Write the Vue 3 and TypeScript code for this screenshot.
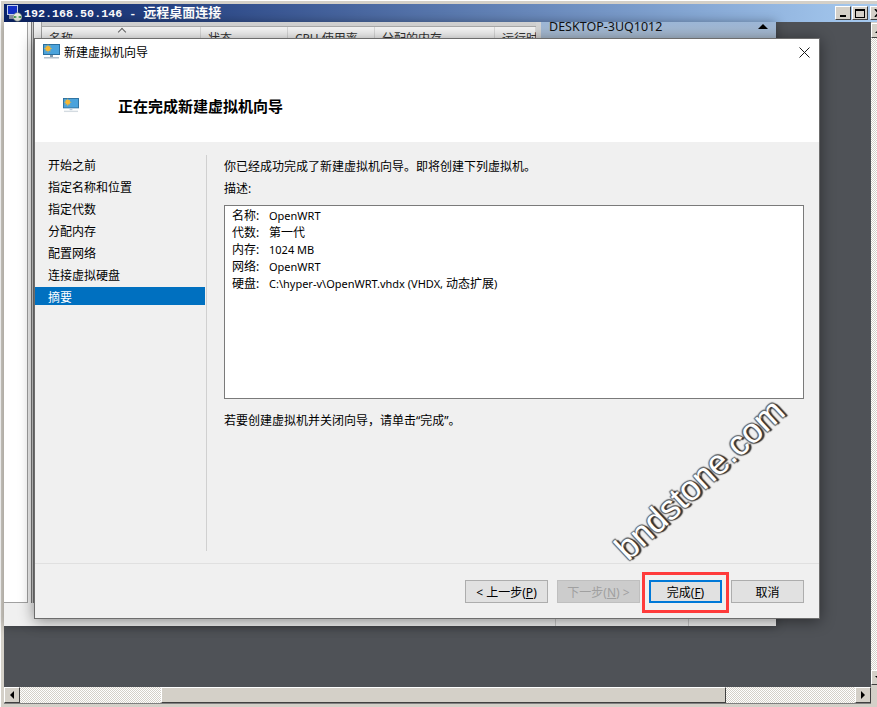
<script setup lang="ts">
const columns = [
  { label: '名称', width: 159 },
  { label: '状态', width: 87 },
  { label: 'CPU 使用率', width: 87 },
  { label: '分配的内存', width: 120 },
  { label: '运行时', width: 41 },
];

const steps = ['开始之前', '指定名称和位置', '指定代数', '分配内存', '配置网络', '连接虚拟硬盘', '摘要'];
const activeStep = '摘要';

// latin runs are a bit smaller than the CJK ones in this dialog
const summary = [
  { label: '名称:', value: 'OpenWRT' },
  { label: '代数:', cjk: '第一代' },
  { label: '内存:', value: '1024 MB' },
  { label: '网络:', value: 'OpenWRT' },
  { label: '硬盘:', value: 'C:\\hyper-v\\OpenWRT.vhdx (VHDX, ', cjk: '动态扩展', tail: ')' },
];
</script>

<template>
  <div class="rdp">
    <div class="titlebar">
      <svg class="rdp-icon" width="16" height="18" viewBox="0 0 16 18">
        <rect x="1" y="1" width="11" height="10" fill="#c4d0ee" />
        <rect x="2" y="2" width="9" height="8" fill="#1430c4" />
        <rect x="3" y="11" width="8" height="4" fill="#8f96a8" />
        <circle cx="11.5" cy="13" r="4.3" fill="#eef0e6" stroke="#7a8a78" stroke-width="0.6" />
        <path d="M8.5 13h2M9.3 12l-1 1 1 1M14.5 13h-2M13.7 12l1 1-1 1" fill="none" stroke="#1c8a2c" stroke-width="1" />
      </svg>
      <span class="title-text"><span class="title-ip">192.168.50.146 - </span>远程桌面连接</span>
      <div class="win-buttons">
        <button class="win-btn"><span class="glyph-min"></span></button>
        <button class="win-btn"><span class="glyph-max"></span></button>
        <button class="win-btn win-close">
          <svg width="9" height="8" viewBox="0 0 9 8"><path d="M1 0l7 8M8 0l-7 8" stroke="#000" stroke-width="1.6" /></svg>
        </button>
      </div>
    </div>

    <div class="middle">
      <div class="client">
        <div class="host">
          <div class="host-main">
            <div class="host-tree"></div>
            <div class="host-splitter"></div>
            <div class="host-center">
              <div class="host-band"></div>
              <div class="host-columns">
                <span class="sort-caret"></span>
                <div v-for="col in columns" :key="col.label" class="host-col" :style="{ width: col.width + 'px' }">
                  {{ col.label }}
                </div>
              </div>
            </div>
            <div class="host-actions">
              <div class="actions-head">
                <span>DESKTOP-3UQ1012</span>
                <i class="actions-arrow"></i>
              </div>
            </div>
          </div>
          <div class="host-foot">
            <span class="foot-tick tick-a"></span>
            <span class="foot-tick tick-b"></span>
          </div>
        </div>

        <div class="dialog">
          <div class="dialog-head">
            <div class="dialog-caption">
              <svg class="monitor" width="17" height="16" viewBox="0 0 17 16">
                <rect x="0.5" y="0.5" width="16" height="10" fill="#4ba3dc" stroke="#2a6f9f" />
                <circle cx="5" cy="4.5" r="2.6" fill="#f7b733" />
                <path d="M5 0.6v8M1.2 4.5h7.6M2.4 2l5.2 5M7.6 2l-5.2 5" stroke="#f7b733" stroke-width="0.7" />
                <rect x="7" y="11" width="3" height="2" fill="#7e97ab" />
                <rect x="1" y="13" width="15" height="1.5" fill="#b4c0cb" />
              </svg>
              <span>新建虚拟机向导</span>
              <svg class="dialog-x" width="11" height="11" viewBox="0 0 11 11">
                <path d="M0.5 0.5l10 10M10.5 0.5l-10 10" stroke="#1a1a1a" stroke-width="1" />
              </svg>
            </div>
            <div class="dialog-banner">
              <svg class="monitor banner-icon" width="16" height="15" viewBox="0 0 17 16">
                <rect x="0.5" y="0.5" width="16" height="10" fill="#4ba3dc" stroke="#2a6f9f" />
                <circle cx="5" cy="4.5" r="2.6" fill="#f7b733" />
                <path d="M5 0.6v8M1.2 4.5h7.6M2.4 2l5.2 5M7.6 2l-5.2 5" stroke="#f7b733" stroke-width="0.7" />
                <rect x="7" y="11" width="3" height="2" fill="#b9cddc" />
                <rect x="1" y="13.5" width="15" height="1.5" fill="#d4dbe1" />
              </svg>
              <h1>正在完成新建虚拟机向导</h1>
            </div>
          </div>

          <div class="dialog-body">
            <ul class="steps">
              <li v-for="step in steps" :key="step" :class="{ active: step === activeStep }">{{ step }}</li>
            </ul>
            <div class="pane">
              <p class="intro">你已经成功完成了新建虚拟机向导。即将创建下列虚拟机。</p>
              <p class="desc-label">描述:</p>
              <div class="summary">
                <div v-for="row in summary" :key="row.label" class="summary-row">
                  <span class="summary-key">{{ row.label }}</span>
                  <span class="summary-latin">{{ row.value }}</span>
                  <span v-if="row.cjk">{{ row.cjk }}</span>
                  <span v-if="row.tail" class="summary-latin">{{ row.tail }}</span>
                </div>
              </div>
              <p class="outro">若要创建虚拟机并关闭向导，请单击“完成”。</p>
            </div>
          </div>

          <div class="dialog-foot">
            <button class="btn btn-wide">&lt; 上一步(<u>P</u>)</button>
            <button class="btn btn-wide btn-disabled" disabled>下一步(<u>N</u>) &gt;</button>
            <button class="btn btn-primary">完成(<u>F</u>)</button>
            <button class="btn">取消</button>
          </div>

          <div class="red-mark"></div>
          <div class="watermark">bndstone.com</div>
        </div>
      </div>

      <div class="vscroll">
        <button class="sb-btn"><i class="arrow-up"></i></button>
        <div class="sb-track"></div>
        <button class="sb-btn"><i class="arrow-down"></i></button>
      </div>
    </div>

    <div class="hscroll">
      <button class="sb-btn sb-h"><i class="arrow-left"></i></button>
      <div class="sb-track sb-track-left"></div>
      <div class="sb-thumb"></div>
      <div class="sb-track"></div>
      <button class="sb-btn sb-h"><i class="arrow-right"></i></button>
    </div>
  </div>
</template>

<style scoped>
.rdp {
  width: 877px;
  height: 707px;
  box-sizing: border-box;
  padding: 4px 0 4px 4px;
  display: flex;
  flex-direction: column;
  overflow: hidden;
  background: #d4d0c8;
  box-shadow: inset 1px 1px 0 #fff;
  font-family: "Noto Sans", "Noto Sans CJK SC", sans-serif;
  font-size: 12px;
  color: #000;
}

.titlebar {
  height: 18px;
  flex: none;
  display: flex;
  align-items: center;
  padding-left: 2px;
  background: linear-gradient(90deg, #0a246a, #a6caf0);
  color: #fff;
}

.rdp-icon {
  flex: none;
}

.title-text {
  margin-left: 2px;
  font-family: "Noto Sans CJK SC", sans-serif;
  font-size: 13px;
  font-weight: 700;
  white-space: pre;
  line-height: 18px;
}

.title-ip {
  font-family: "Liberation Mono", monospace;
  font-size: 11.7px;
}

.win-buttons {
  margin-left: auto;
  display: flex;
  gap: 1px;
  margin-right: -9px;
}

.win-btn {
  width: 16px;
  height: 14px;
  padding: 0;
  border: 1px solid;
  border-color: #fff #404040 #404040 #fff;
  background: #d4d0c8;
  display: flex;
  align-items: center;
  justify-content: center;
}

.win-close {
  margin-left: 1px;
}

.glyph-min {
  width: 6px;
  height: 2px;
  background: #000;
  margin-top: 6px;
}

.glyph-max {
  width: 10px;
  height: 9px;
  box-sizing: border-box;
  border: 1px solid #000;
  border-top-width: 2px;
}

.middle {
  flex: 1;
  min-height: 0;
  display: flex;
}

.client {
  flex: 1;
  position: relative;
  background: #4f5257;
}

.host {
  position: absolute;
  left: 0;
  top: 0;
  width: 772px;
  height: 604px;
  display: flex;
  flex-direction: column;
  background: #f0f0f0;
  box-shadow: 0 0 10px rgba(0, 0, 0, 0.35);
}

.host-main {
  height: 581px;
  display: flex;
}

.host-tree {
  width: 23px;
  background: #fff;
  border-right: 1px solid #a0a0a0;
  border-bottom: 1px solid #a0a0a0;
  box-sizing: content-box;
}

.host-splitter {
  width: 3px;
  margin-left: 3px;
  background: #d0d0d0;
  border-left: 1px solid #777;
  border-right: 1px solid #777;
  box-sizing: border-box;
}

.host-center {
  width: 494px;
  margin-left: 7px;
  border-left: 1px solid #a0a0a0;
  overflow: hidden;
}

.host-band {
  height: 5px;
  background: #d0d0d0;
  border-bottom: 1px solid #a8a8a8;
  box-sizing: border-box;
}

.host-columns {
  height: 24px;
  position: relative;
  display: flex;
  background: #f4f4f4;
  color: #333;
}

.host-col {
  flex: none;
  box-sizing: border-box;
  padding-left: 7px;
  border-right: 1px solid #d8d8d8;
  line-height: 24px;
  white-space: nowrap;
}

.sort-caret {
  position: absolute;
  left: 77px;
  top: 2px;
  width: 5px;
  height: 5px;
  border-left: 1px solid #666;
  border-top: 1px solid #666;
  transform: rotate(45deg);
}

.host-actions {
  width: 235px;
  border-left: 5px solid #d4d4d4;
}

.actions-head {
  height: 16px;
  box-sizing: border-box;
  display: flex;
  align-items: flex-start;
  padding: 0 8px;
  background: linear-gradient(180deg, #9cb6d6, #a9bbd0);
  color: #111;
  font-size: 12.5px;
  line-height: 9px;
}

.actions-arrow {
  margin: 2px 0 0 auto;
  border: 5px solid transparent;
  border-top: 0;
  border-bottom: 5px solid #000;
}

.host-foot {
  flex: 1;
  position: relative;
}

.foot-tick {
  position: absolute;
  bottom: 0;
  width: 1px;
  height: 7px;
  background: #c8c8c8;
}

.tick-a {
  left: 551px;
}

.tick-b {
  left: 684px;
}

.dialog {
  position: absolute;
  left: 30px;
  top: 16px;
  width: 786px;
  height: 581px;
  box-sizing: border-box;
  border: 1px solid #6d6d6d;
  display: flex;
  flex-direction: column;
  background: #f0f0f0;
  box-shadow: 0 2px 14px rgba(0, 0, 0, 0.45);
}

.dialog-head {
  height: 103px;
  flex: none;
  background: #fff;
}

.dialog-caption {
  height: 26px;
  display: flex;
  align-items: center;
  padding-left: 8px;
  gap: 4px;
}

.dialog-x {
  margin-left: auto;
  margin-right: 9px;
}

.dialog-banner {
  margin-top: 30px;
  display: flex;
  align-items: center;
  padding-left: 28px;
}

.banner-icon {
  margin-right: 39px;
}

.dialog-banner h1 {
  margin: 0;
  font-size: 15px;
  font-weight: 700;
}

.dialog-body {
  flex: 1;
  min-height: 0;
  display: flex;
  padding-top: 13px;
}

.steps {
  list-style: none;
  margin: 0;
  padding: 0;
  width: 170px;
  flex: none;
  display: flex;
  flex-direction: column;
  gap: 4px;
}

.steps li {
  height: 18px;
  line-height: 22px;
  padding-left: 13px;
}

.steps li.active {
  background: #0070c0;
  color: #fff;
}

.pane {
  margin-left: 1px;
  width: 598px;
  height: 396px;
  border-left: 1px solid #d0d0d0;
  padding: 3px 0 0 17px;
  box-sizing: border-box;
}

.pane p {
  margin: 0;
  line-height: 18px;
}

.desc-label {
  margin-top: 4px !important;
}

.summary {
  margin-top: 7px;
  width: 580px;
  height: 194px;
  box-sizing: border-box;
  border: 1px solid #7a7a7a;
  background: #fff;
  padding: 1px 0 0 7px;
}

.summary-row {
  height: 17px;
  line-height: 17px;
  display: flex;
  white-space: pre;
}

.summary-key {
  width: 37px;
  flex: none;
}

.summary-latin {
  font-size: 11px;
}

.outro {
  margin-top: 13px !important;
}

.dialog-foot {
  height: 55px;
  flex: none;
  box-sizing: border-box;
  border-top: 1px solid #e0e0e0;
  display: flex;
  justify-content: flex-end;
  gap: 9px;
  padding: 16px 15px 0 0;
}

.btn {
  width: 73px;
  height: 23px;
  padding: 0;
  box-sizing: border-box;
  border: 1px solid #adadad;
  background: #e1e1e1;
  font: inherit;
  color: #000;
}

.btn-wide {
  width: 83px;
}

.btn-disabled {
  background: #ccc;
  border-color: #bfbfbf;
  color: #a0a0a0;
}

.btn-primary {
  border: 2px solid #0078d7;
}

.red-mark {
  position: absolute;
  left: 607px;
  top: 533px;
  width: 87px;
  height: 41px;
  box-sizing: border-box;
  border: 3px solid #ff3b3b;
}

.watermark {
  position: absolute;
  left: 556px;
  top: 420px;
  transform: rotate(-43deg);
  transform-origin: center;
  font-family: "Liberation Sans", Arial, sans-serif;
  font-size: 34.5px;
  line-height: 40px;
  color: #fff;
  white-space: nowrap;
  text-shadow: 2px 2px 1px #333, -1px -1px 1px #666, 1px -1px 1px #666, -1px 1px 1px #666;
}

.vscroll {
  width: 6px;
  flex: none;
  overflow: hidden;
  display: flex;
  flex-direction: column;
  padding: 1px 0 2px;
  box-sizing: border-box;
}

.sb-track {
  flex: 1;
  background: repeating-conic-gradient(#d4d0c8 0 25%, #fff 0 50%) 0 0 / 2px 2px;
}

.sb-btn {
  width: 16px;
  height: 15px;
  flex: none;
  padding: 0;
  border: 1px solid;
  border-color: #fff #404040 #404040 #fff;
  background: #d4d0c8;
  display: flex;
  align-items: center;
  justify-content: center;
}

.hscroll {
  height: 16px;
  flex: none;
  width: 867px;
  display: flex;
  box-shadow: 0 1px 0 #808080;
}

.sb-h {
  height: 16px;
  width: 16px;
}

.sb-track-left {
  flex: none;
  width: 141px;
}

.sb-thumb {
  width: 565px;
  flex: none;
  box-sizing: border-box;
  background: #d4d0c8;
  border: 1px solid;
  border-color: #fff #404040 #404040 #fff;
}

.arrow-left,
.arrow-right,
.arrow-up,
.arrow-down {
  width: 0;
  height: 0;
  border: 4px solid transparent;
}

.arrow-left {
  border-left: 0;
  border-right-color: #000;
}

.arrow-right {
  border-right: 0;
  border-left-color: #000;
}

.arrow-up {
  border-top: 0;
  border-bottom-color: #000;
}

.arrow-down {
  border-bottom: 0;
  border-top-color: #000;
}
</style>
